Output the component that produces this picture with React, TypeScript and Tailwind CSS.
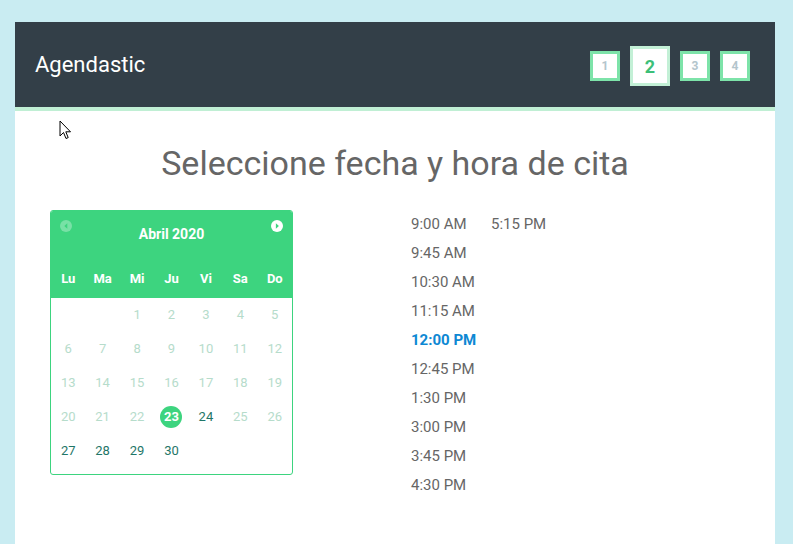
import React from "react";

const weekDays = ["Lu", "Ma", "Mi", "Ju", "Vi", "Sa", "Do"];

// april 2020 starts on wednesday
const cells: (number | null)[] = [null, null, ...Array.from({ length: 30 }, (_, i) => i + 1)];
const enabled = [23, 24, 27, 28, 29, 30];

const col1 = [
  "9:00 AM",
  "9:45 AM",
  "10:30 AM",
  "11:15 AM",
  "12:00 PM",
  "12:45 PM",
  "1:30 PM",
  "3:00 PM",
  "3:45 PM",
  "4:30 PM",
];
const col2 = ["5:15 PM"];

function Arrow({ dir, faded }: { dir: "l" | "r"; faded?: boolean }) {
  return (
    <svg width="12" height="12" viewBox="0 0 12 12" className={faded ? "opacity-30" : ""}>
      <circle cx="6" cy="6" r="6" fill="#ffffff" />
      {dir === "l" ? (
        <path d="M7.3 3.3 L4.3 6 L7.3 8.7 Z" fill="#3dd47f" />
      ) : (
        <path d="M4.9 3.3 L7.9 6 L4.9 8.7 Z" fill="#3dd47f" />
      )}
    </svg>
  );
}

function Step({ n, active }: { n: number; active?: boolean }) {
  if (active) {
    return (
      <div className="w-[40px] h-[40px] bg-white border-[3px] border-[#c3f0d6] flex items-center justify-center text-[18px] font-bold text-[#3cbf78]">
        {n}
      </div>
    );
  }
  return (
    <div className="w-[30px] h-[30px] bg-white border-[3px] border-[#7de3a9] flex items-center justify-center text-[12px] font-bold text-[#b3c5cc]">
      {n}
    </div>
  );
}

export default function App() {
  return (
    <div className="min-h-screen bg-[#c9ecf2] pt-[22px] pl-[15px] pr-[18px] font-['Roboto',_'Liberation_Sans',_sans-serif]">
      <div className="bg-white min-h-[522px] relative">
        {/* HEADER */}
        <div className="h-[85px] bg-[#333f48] flex items-center justify-between pl-5 pr-[25px]">
          <div className="text-white text-[22px] -mt-[1px]">Agendastic</div>
          <div className="flex items-center gap-[10px] mt-[3px]">
            <Step n={1} />
            <Step n={2} active />
            <Step n={3} />
            <Step n={4} />
          </div>
        </div>
        <div className="h-[4px] bg-[#c0efd4]" />

        {/* BODY */}
        <div className="px-[35px]">
          <h1 className="text-center text-[34px] leading-[42px] text-[#666666] pt-[31px] pb-[26px]">
            Seleccione fecha y hora de cita
          </h1>

          <div className="grid grid-cols-2 items-start">
            {/* CALENDAR */}
            <div className="w-[243px] border border-[#3dd47f] rounded-[3px] overflow-hidden pb-[6px]">
              <div className="bg-[#3dd47f] relative">
                <div className="absolute left-[9px] top-[9px]">
                  <Arrow dir="l" faded />
                </div>
                <div className="absolute right-[9px] top-[9px]">
                  <Arrow dir="r" />
                </div>
                <div className="h-[47px] pt-[13px] text-center text-white text-[14px] leading-[20px] font-bold">
                  Abril 2020
                </div>
                <div className="grid grid-cols-7 h-[40px] items-center pt-[1px]">
                  {weekDays.map((d) => (
                    <div key={d} className="text-center text-white text-[13px] font-bold">
                      {d}
                    </div>
                  ))}
                </div>
              </div>
              <div className="grid grid-cols-7">
                {cells.map((c, i) => (
                  <div key={i} className="h-[34px] flex items-center justify-center text-[13px]">
                    {c === 23 ? (
                      <span className="w-[22px] h-[22px] rounded-full bg-[#3dd47f] text-white font-bold flex items-center justify-center">
                        {c}
                      </span>
                    ) : c ? (
                      <span className={enabled.includes(c) ? "text-[#1f7668]" : "text-[#b6dccb]"}>{c}</span>
                    ) : null}
                  </div>
                ))}
              </div>
            </div>

            {/* TIMES */}
            <div className="flex pl-4 text-[15px] leading-[29px] text-[#666666]">
              <div className="w-[80px]">
                {col1.map((t) => (
                  <div key={t} className={t === "12:00 PM" ? "font-bold text-[#0d88d3]" : ""}>
                    {t}
                  </div>
                ))}
              </div>
              <div>
                {col2.map((t) => (
                  <div key={t}>{t}</div>
                ))}
              </div>
            </div>
          </div>
        </div>

        {/* mouse pointer */}
        <svg className="absolute left-[44px] top-[98px]" width="13" height="20" viewBox="0 0 13 20">
          <path d="M1 1 L1 16 L4.5 12.5 L7 18.5 L9.2 17.6 L6.8 11.8 L11.5 11.8 Z" fill="#ffffff" stroke="#000000" strokeWidth="1" strokeLinejoin="round" />
        </svg>
      </div>
    </div>
  );
}
